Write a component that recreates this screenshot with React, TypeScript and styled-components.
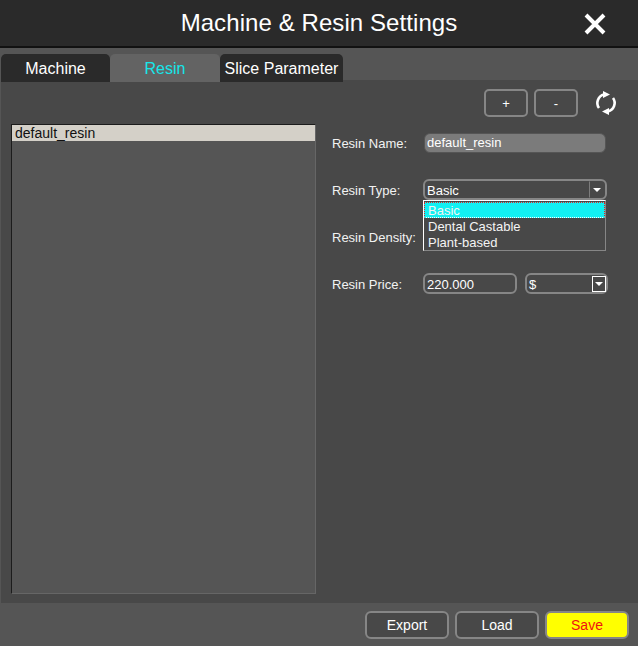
import React from "react";
import styled, { createGlobalStyle } from "styled-components";

const Global = createGlobalStyle`
  html, body { margin: 0; padding: 0; background: #555555; }
  body { font-family: "Liberation Sans", Arial, sans-serif; }
`;

const Window = styled.div`
  width: 638px;
  height: 646px;
  display: flex;
  flex-direction: column;
  background: #555555;
  overflow: hidden;
  color: #fff;
`;

const Header = styled.header`
  height: 46px;
  flex: none;
  background: #2a2a2a;
  border-bottom: 2px solid #111;
  display: flex;
  align-items: center;
  justify-content: center;
  position: relative;
`;

const Title = styled.h1`
  margin: 0 0 1px 0;
  font-size: 24px;
  font-weight: 400;
  letter-spacing: 0.08px;
  color: #fff;
`;

const CloseIcon = styled.svg`
  position: absolute;
  left: 584px;
  top: 13px;
  width: 22px;
  height: 22px;
`;

const TabBar = styled.nav`
  height: 32px;
  flex: none;
  display: flex;
  align-items: flex-end;
  padding-left: 1px;
  background: #555555;
`;

const Tab = styled.div<{ $active?: boolean; $w: number }>`
  width: ${(p) => p.$w}px;
  height: 28px;
  box-sizing: border-box;
  padding-top: 1px;
  margin-bottom: -2px;
  position: relative;
  z-index: 1;
  border-radius: 5px 5px 0 0;
  background: ${(p) => (p.$active ? "#636363" : "#2a2a2a")};
  color: ${(p) => (p.$active ? "#16e6ea" : "#fff")};
  font-size: 16px;
  display: flex;
  align-items: center;
  justify-content: center;
`;

const Content = styled.main`
  flex: 1;
  margin-left: 1px;
  background: #484848;
  display: flex;
  flex-direction: column;
  padding: 9px 0 9px 10px;
  min-height: 0;
`;

const Tools = styled.div`
  display: flex;
  align-items: center;
  justify-content: flex-end;
  height: 28px;
  flex: none;
  gap: 6px;
  padding-right: 20px;
`;

const SmallButton = styled.button`
  width: 44px;
  height: 28px;
  box-sizing: border-box;
  border: 2px solid #868686;
  border-radius: 5px;
  background: #484848;
  color: #fff;
  font: 13px "Liberation Sans", Arial, sans-serif;
  padding: 0;
`;

const RefreshIcon = styled.svg`
  width: 24px;
  height: 24px;
  margin-left: 10px;
  flex: none;
`;

const Body = styled.div`
  flex: 1;
  display: flex;
  margin-top: 7px;
  min-height: 0;
`;

const List = styled.div`
  width: 305px;
  flex: none;
  box-sizing: border-box;
  background: #555555;
  border-style: solid;
  border-width: 1px;
  border-color: #1c1c1c #666 #666 #1c1c1c;
`;

const ListItem = styled.div`
  height: 16px;
  line-height: 16px;
  background: #d4d0c8;
  color: #111;
  font-size: 14px;
  padding-left: 3px;
`;

const Form = styled.section`
  flex: 1;
  display: flex;
  flex-direction: column;
  padding: 9px 0 0 16px;
  position: relative;
`;

const Row = styled.div<{ $gap: number }>`
  display: flex;
  align-items: center;
  height: 21px;
  margin-bottom: ${(p) => p.$gap}px;
`;

const Label = styled.label<{ $low?: boolean }>`
  width: 91px;
  flex: none;
  font-size: 13px;
  line-height: 15px;
  padding-top: ${(p) => (p.$low ? 2 : 0)}px;
  color: #f2f2f2;
  white-space: nowrap;
`;

const NameInput = styled.div`
  width: 182px;
  height: 20px;
  box-sizing: border-box;
  align-self: flex-start;
  margin-left: 1px;
  background: #7b7b7b;
  border: 1px solid #555;
  border-radius: 6px;
  font-size: 13px;
  line-height: 18px;
  padding-left: 2px;
  color: #fff;
`;

const Combo = styled.div<{ $w: number }>`
  width: ${(p) => p.$w}px;
  height: 21px;
  box-sizing: border-box;
  border: 2px solid #868686;
  border-radius: 6px;
  background: #484848;
  font-size: 13px;
  padding-left: 2px;
  color: #fff;
  display: flex;
  align-items: center;
  justify-content: space-between;
  flex: none;
`;

const ComboValue = styled.span`
  line-height: 15px;
  padding-top: 2px;
`;

const Arrow = styled.span<{ $light?: boolean }>`
  width: ${(p) => (p.$light ? 14 : 16)}px;
  height: ${(p) => (p.$light ? 16 : 17)}px;
  flex: none;
  box-sizing: border-box;
  border-left: 1px solid ${(p) => (p.$light ? "#fff" : "#7c7c7c")};
  border-top: 1px solid ${(p) => (p.$light ? "#fff" : "transparent")};
  border-bottom: 1px solid ${(p) => (p.$light ? "#fff" : "transparent")};
  border-right: 1px solid ${(p) => (p.$light ? "#fff" : "transparent")};
  display: flex;
  align-items: center;
  justify-content: center;
  &::after {
    content: "";
    border-left: 4px solid transparent;
    border-right: 4px solid transparent;
    border-top: 4px solid #fff;
    margin-top: 1px;
  }
`;

const Dropdown = styled.div`
  position: absolute;
  left: 107px;
  top: 76px;
  width: 183px;
  height: 51px;
  box-sizing: border-box;
  background: #484848;
  border-style: solid;
  border-width: 1px;
  border-color: #fff #868686 #868686 #fff;
  font-size: 13px;
  z-index: 2;
`;

const Option = styled.div<{ $selected?: boolean }>`
  height: 16px;
  line-height: 18px;
  box-sizing: border-box;
  padding-left: 4px;
  color: #f4f4f4;
  ${(p) =>
    p.$selected &&
    `
    background: #12f0f2;
    margin-top: 1px;
    padding-left: 3px;
    line-height: 16px;
    border: 1px dotted #e02020;
    border-bottom-color: #ffffff;
  `}
`;

const PriceInput = styled.div`
  width: 94px;
  height: 21px;
  box-sizing: border-box;
  border: 2px solid #868686;
  border-radius: 6px;
  background: #484848;
  font-size: 13px;
  line-height: 19px;
  padding-left: 2px;
  color: #fff;
  flex: none;
  margin-right: 8px;
`;

const Footer = styled.footer`
  height: 43px;
  flex: none;
  display: flex;
  align-items: center;
  justify-content: flex-end;
  gap: 6px;
  padding-right: 9px;
  background: #555555;
`;

const FooterButton = styled.button<{ $primary?: boolean }>`
  width: 84px;
  height: 28px;
  box-sizing: border-box;
  border: 2px solid #868686;
  border-radius: 6px;
  background: ${(p) => (p.$primary ? "#ffff00" : "#484848")};
  color: ${(p) => (p.$primary ? "#f01010" : "#fff")};
  font: 14px "Liberation Sans", Arial, sans-serif;
  padding: 0;
`;

export default function App() {
  return (
    <Window>
      <Global />
      <Header>
        <Title>Machine &amp; Resin Settings</Title>
        <CloseIcon viewBox="0 0 22 22">
          <path d="M2 2 L20 20 M20 2 L2 20" stroke="#fff" strokeWidth="4" fill="none" />
        </CloseIcon>
      </Header>
      <TabBar>
        <Tab $w={109}>Machine</Tab>
        <Tab $w={110} $active>Resin</Tab>
        <Tab $w={123}>Slice Parameter</Tab>
      </TabBar>
      <Content>
        <Tools>
          <SmallButton>+</SmallButton>
          <SmallButton>-</SmallButton>
          <RefreshIcon viewBox="0 0 24 24">
            <path d="M5 17 A8.6 8.6 0 0 1 10 3.6" stroke="#fff" strokeWidth="2.6" fill="none" />
            <path d="M19 7 A8.6 8.6 0 0 1 14 20.4" stroke="#fff" strokeWidth="2.6" fill="none" />
            <path d="M9 0 L16 3.5 L9 7 Z" fill="#fff" />
            <path d="M15 24 L8 20.5 L15 17 Z" fill="#fff" />
          </RefreshIcon>
        </Tools>
        <Body>
          <List>
            <ListItem>default_resin</ListItem>
          </List>
          <Form>
            <Row $gap={25}>
              <Label>Resin Name:</Label>
              <NameInput>default_resin</NameInput>
            </Row>
            <Row $gap={26}>
              <Label $low>Resin Type:</Label>
              <Combo $w={184}>
                <ComboValue>Basic</ComboValue>
                <Arrow />
              </Combo>
            </Row>
            <Row $gap={26}>
              <Label $low>Resin Density:</Label>
            </Row>
            <Row $gap={0}>
              <Label $low>Resin Price:</Label>
              <PriceInput>220.000</PriceInput>
              <Combo $w={83}>
                <ComboValue>$</ComboValue>
                <Arrow $light />
              </Combo>
            </Row>
            <Dropdown>
              <Option $selected>Basic</Option>
              <Option>Dental Castable</Option>
              <Option>Plant-based</Option>
            </Dropdown>
          </Form>
        </Body>
      </Content>
      <Footer>
        <FooterButton>Export</FooterButton>
        <FooterButton>Load</FooterButton>
        <FooterButton $primary>Save</FooterButton>
      </Footer>
    </Window>
  );
}
